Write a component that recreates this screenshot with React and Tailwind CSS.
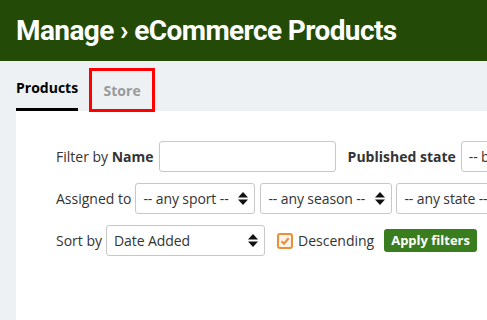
import React from "react";

function Arrows() {
  return (
    <svg width="10" height="15" viewBox="0 0 10 15" className="shrink-0">
      <path d="M5 1 L10 6.5 L0 6.5 Z" fill="#111" />
      <path d="M5 14 L10 8.5 L0 8.5 Z" fill="#111" />
    </svg>
  );
}

function Select({ label, width }) {
  return (
    <div
      className="h-[31px] shrink-0 flex items-center justify-between pl-[7px] pr-[6px] bg-white border border-[#c8c8c8] rounded-[3px] text-[#333]"
      style={{ width }}
    >
      <span className="whitespace-nowrap tracking-[-0.1px]">{label}</span>
      <Arrows />
    </div>
  );
}

export default function App() {
  return (
    <div className="w-[487px] h-[320px] overflow-hidden bg-[#eef1f4] font-['Open_Sans',sans-serif] text-[14px] text-[#333]">
      <div className="h-[61px] bg-[#234a07] flex items-center pl-[16px]">
        <h1 className="text-white font-bold text-[28px] tracking-[-0.6px] font-['Roboto',sans-serif] whitespace-nowrap">
          Manage › eCommerce Products
        </h1>
      </div>

      <div className="flex items-end h-[50px] pl-[16px]">
        <div className="h-[50px] flex flex-col justify-end">
          <span className="font-bold text-[14px] text-black leading-none pb-[13px]">Products</span>
          <div className="h-[3px] bg-black w-[62px]" />
        </div>
        <div className="ml-[11px] mb-[-1px] w-[66px] h-[44px] border-[3px] border-[#f00] flex items-center justify-center">
          <span className="font-bold text-[14px] text-[#9a9a9a]">Store</span>
        </div>
      </div>

      <div className="ml-[16px] h-[209px] bg-white pt-[30px] pl-[40px] flex flex-col gap-[11px]">
        <div className="flex items-center">
          <span className="whitespace-nowrap">
            Filter by <b>Name</b>
          </span>
          <div className="ml-[5px] w-[177px] h-[31px] shrink-0 border border-[#c8c8c8] rounded-[3px]" />
          <span className="ml-[12px] font-bold whitespace-nowrap">Published state</span>
          <div className="ml-[5px]">
            <Select label="-- both --" width={120} />
          </div>
        </div>

        <div className="flex items-center">
          <span className="whitespace-nowrap mr-[4px]">Assigned to</span>
          <Select label="-- any sport --" width={120} />
          <div className="ml-[5px]">
            <Select label="-- any season --" width={132} />
          </div>
          <div className="ml-[4px]">
            <Select label="-- any state --" width={130} />
          </div>
        </div>

        <div className="flex items-center">
          <span className="whitespace-nowrap mr-[4px]">Sort by</span>
          <Select label="Date Added" width={159} />
          <div className="ml-[12px] w-[16px] h-[16px] shrink-0 rounded-[3px] border-2 border-[#e8913a] bg-[#fdf3e8] flex items-center justify-center">
            <svg width="10" height="10" viewBox="0 0 10 10">
              <path d="M1.5 5.2 L4 7.6 L8.6 2.2" stroke="#e8913a" strokeWidth="2.2" fill="none" />
            </svg>
          </div>
          <span className="ml-[5px] whitespace-nowrap">Descending</span>
          <button className="ml-[10px] h-[23px] px-[7px] rounded-[3px] bg-[#3a7d1f] text-white font-bold text-[13px] whitespace-nowrap">
            Apply filters
          </button>
        </div>
      </div>
    </div>
  );
}
